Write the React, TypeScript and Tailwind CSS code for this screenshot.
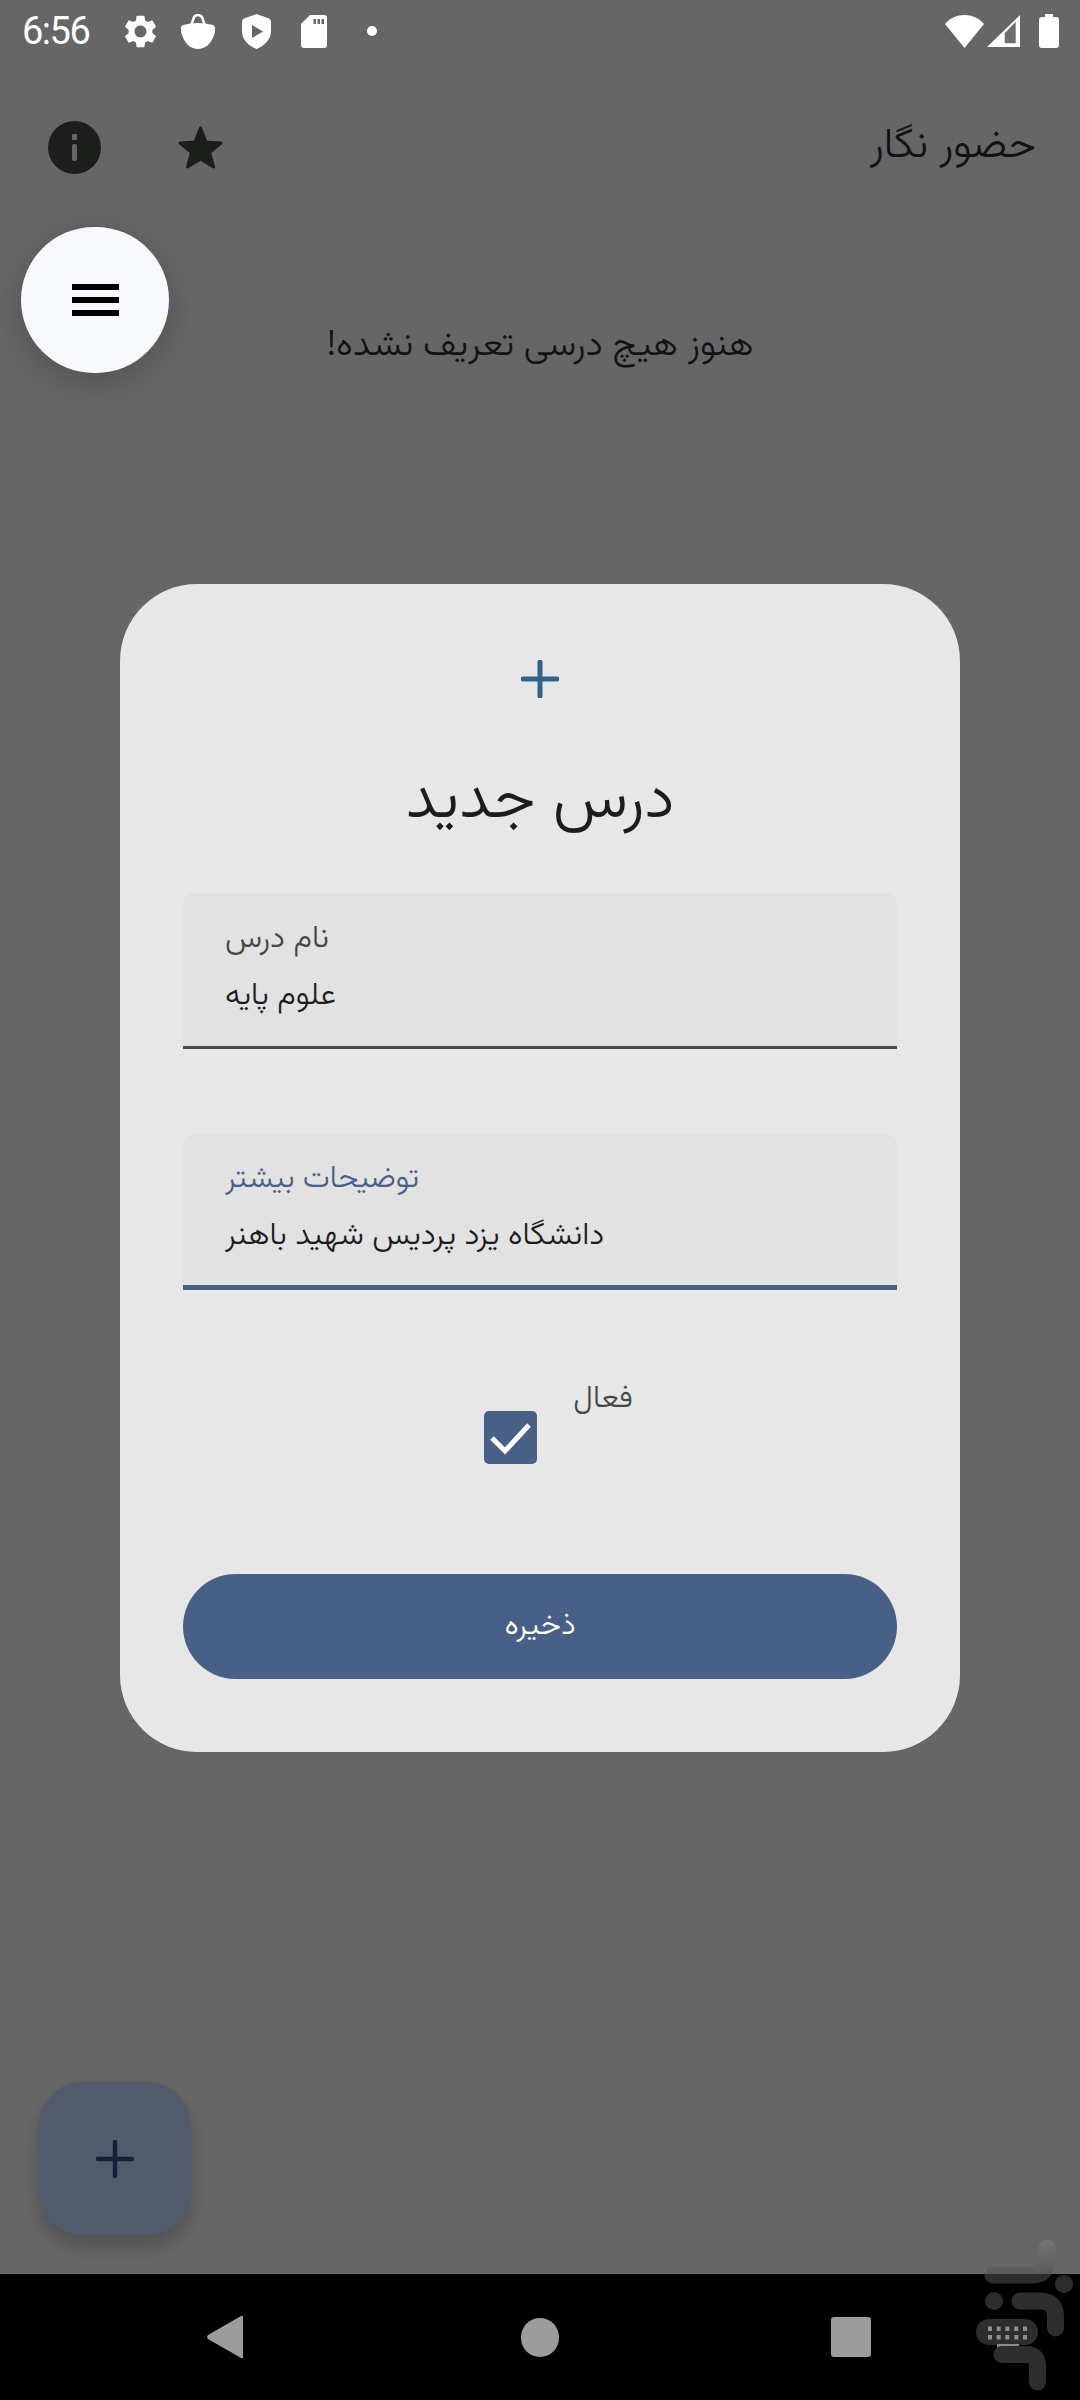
const fa = "font-['Vazirmatn','DejaVu_Sans','Noto_Sans',sans-serif] font-[350]"

function StatusBar() {
  return (
    <div className="h-[62px] shrink-0 flex items-center pl-[22px] pr-[21px] text-white">
      <span className="font-['Roboto',sans-serif] text-[38px] tracking-[-1.500px] leading-none w-[102px]">6:56</span>
      <svg viewBox="2.600 2 18.800 20" className="w-[33px] h-[33px] fill-white">
        <path d="M19.140 12.940c.04-.3.06-.61.06-.94 0-.32-.02-.64-.07-.94l2.030-1.580a.49.49 0 0 0 .12-.61l-1.920-3.320a.488.488 0 0 0-.59-.22l-2.390.96c-.5-.38-1.030-.7-1.620-.94l-.36-2.540a.484.484 0 0 0-.48-.41h-3.840c-.24 0-.43.17-.47.41l-.36 2.540c-.59.24-1.130.57-1.620.94l-2.390-.96c-.22-.08-.47 0-.59.22L2.740 8.870c-.12.21-.08.47.12.61l2.030 1.580c-.05.3-.09.63-.09.94s.02.64.07.94l-2.030 1.580a.49.49 0 0 0-.12.61l1.920 3.320c.12.22.37.29.59.22l2.390-.96c.5.38 1.030.7 1.620.94l.36 2.540c.05.24.24.41.48.41h3.840c.24 0 .44-.17.47-.41l.36-2.540c.59-.24 1.130-.56 1.620-.94l2.390.96c.22.08.47 0 .59-.22l1.920-3.320c.12-.22.07-.47-.12-.61l-2.010-1.580zM12 15.600c-1.980 0-3.600-1.620-3.600-3.600s1.620-3.600 3.600-3.600 3.600 1.620 3.600 3.600-1.620 3.600-3.600 3.600z" />
      </svg>
      <svg viewBox="0 0 34 35" className="w-[34px] h-[35px] ml-[24px] fill-white">
        <path d="M2 11Q17 7 32 11Q36 13 33 21C30 30 24 35 17 35C10 35 4 30 1 21Q-2 13 2 11z" />
        <path d="M10 12L13 3Q17-1 21 3L24 12" fill="none" stroke="white" strokeWidth="2.500" />
      </svg>
      <svg viewBox="0 0 29 35" className="w-[29px] h-[35px] ml-[27px] fill-white">
        <path d="M14.500 0L27 4.500Q29 5 29 8V17C29 26 22 32 14.500 35C7 32 0 26 0 17V8Q0 5 2 4.500z" />
        <path d="M10 11L21 17.500L10 24z" fill="#666666" />
      </svg>
      <svg viewBox="0 0 26 33" className="w-[26px] h-[33px] ml-[30px] fill-white">
        <path d="M9 0H23a3 3 0 0 1 3 3V30a3 3 0 0 1-3 3H3a3 3 0 0 1-3-3V9z" />
        <path d="M12.500 4H15V9H12.500zM16.500 4H19V9H16.500zM20.500 4H23V9H20.500z" fill="#666666" />
      </svg>
      <span className="w-[10px] h-[10px] rounded-full bg-white ml-[40px]" />
      <div className="flex-1" />
      <svg viewBox="0 0 39 33" className="w-[39px] h-[33px] fill-white">
        <path d="M19.500 33L0 9C5 3 12 0 19.500 0S34 3 39 9z" />
      </svg>
      <svg viewBox="0 0 33 32" className="w-[33px] h-[32px] ml-[3px]">
        <path d="M33 0L0 32H33z" fill="white" />
        <path d="M28.700 6.700L17.700 18.300V28.300H28.700z" fill="#6e6e6e" />
      </svg>
      <svg viewBox="0 0 20 34" className="w-[20px] h-[34px] ml-[19px] fill-white">
        <path d="M6 3V0h8v3h3a3 3 0 0 1 3 3v25a3 3 0 0 1-3 3H3a3 3 0 0 1-3-3V6a3 3 0 0 1 3-3z" />
      </svg>
    </div>
  )
}

function Field({ label, value, active }: { label: string; value: string; active?: boolean }) {
  return (
    <div
      dir="rtl"
      className={`h-[156px] rounded-t-[11px] bg-[#e2e2e2] pl-[42px] ${
        active ? 'pt-[26px] border-b-[5px] border-[#486085]' : 'pt-[27px] border-b-[3px] border-[#4a4c4a]'
      }`}
    >
      <p className={`${fa} leading-[40px] text-left ${active ? 'text-[31px] text-[#486085]' : 'text-[31.500px] text-[#444744]'}`}>
        {label}
      </p>
      <p className={`${fa} text-[31.500px] leading-[40px] mt-[17px] text-left text-[#1a1c1e]`}>{value}</p>
    </div>
  )
}

function Dialog() {
  return (
    <div className="absolute left-[120px] top-[584px] w-[840px] h-[1168px] rounded-[77px] bg-[#e7e7e7] px-[63px] flex flex-col">
      <svg viewBox="0 0 38 38" className="w-[38px] h-[38px] mt-[76px] self-center stroke-[#2d6488]" fill="none" strokeWidth="5" strokeLinecap="round">
        <path d="M19 2v34M2 19h34" />
      </svg>
      <h2 dir="rtl" className={`${fa} text-[64px] leading-[70px] text-center text-[#1a1c1e] mt-[68px]`}>
        درس جدید
      </h2>
      <div className="mt-[57px]">
        <Field label="نام درس" value="علوم پایه" />
      </div>
      <div className="mt-[85px]">
        <Field label="توضیحات بیشتر" value="دانشگاه یزد پردیس شهید باهنر" active />
      </div>
      <div className="flex justify-center items-start mt-[90px] pl-[37px]">
        <div className="w-[53px] h-[53px] rounded-[5px] bg-[#486085] mt-[31px]">
          <svg viewBox="0 0 53 53" className="w-[53px] h-[53px]" fill="none" stroke="white" strokeWidth="5">
            <path d="M8 27l13 13 24-26" />
          </svg>
        </div>
        <span dir="rtl" className={`${fa} text-[31px] leading-[40px] text-[#444744] ml-[36px]`}>
          فعال
        </span>
      </div>
      <button className="mt-[110px] h-[105px] rounded-full bg-[#486085] text-white flex items-center justify-center">
        <span dir="rtl" className={`${fa} text-[31px] leading-[40px]`}>
          ذخیره
        </span>
      </button>
    </div>
  )
}

// store watermark in the bottom right corner, it straddles the nav bar edge
function Watermark() {
  return (
    <svg viewBox="0 0 120 170" className="absolute left-[960px] top-[2230px] w-[120px] h-[170px]">
      <defs>
        <linearGradient id="mark" gradientUnits="userSpaceOnUse" x1="0" y1="10" x2="0" y2="170">
          <stop offset="0" stopColor="#727272" />
          <stop offset="0.12" stopColor="#666666" />
          <stop offset="0.21" stopColor="#5a5a5a" />
          <stop offset="0.21" stopColor="#2d2d2d" />
          <stop offset="1" stopColor="#2d2d2d" />
        </linearGradient>
      </defs>
      <path d="M87 18V30Q87 45 72 45H33" fill="none" stroke="url(#mark)" strokeWidth="17" strokeLinecap="round" />
      <circle cx="104" cy="54" r="9" fill="#2d2d2d" />
      <circle cx="34" cy="71" r="9" fill="#2d2d2d" />
      <path d="M60 71H80Q95.500 71 95.500 86V98" fill="none" stroke="#2d2d2d" strokeWidth="17" strokeLinecap="round" />
      <rect x="16" y="89" width="62" height="26" rx="13" fill="#2d2d2d" />
      {[30, 38.7, 47.3, 56.3, 65].map(x => (
        <g key={x} fill="#8f8f8f">
          <rect x={x - 2} y="96.500" width="4" height="4.500" />
          <rect x={x - 2} y="105" width="4" height="4.500" />
        </g>
      ))}
      <rect x="37" y="114" width="22" height="4" fill="#8a8a8a" />
      <path d="M42 124.500H66Q77.500 124.500 77.500 136V152" fill="none" stroke="#2d2d2d" strokeWidth="17" strokeLinecap="round" />
    </svg>
  )
}

export default function App() {
  return (
    <div className="relative w-[1080px] h-[2400px] overflow-hidden bg-[#666666] flex flex-col">
      <StatusBar />

      <header className="h-[96px] flex items-center justify-between pl-[48px] pr-[44px] mt-[37px]">
        <div className="flex items-center">
          <svg viewBox="0 0 53 53" className="w-[53px] h-[53px]">
            <circle cx="26.500" cy="26.500" r="26.500" fill="#1c1e1c" />
            <rect x="24" y="13" width="5" height="6" rx="1" fill="#666666" />
            <rect x="24" y="23" width="5" height="17" rx="2" fill="#666666" />
          </svg>
          <svg viewBox="0 0 45 43" className="w-[45px] h-[43px] ml-[77px] fill-[#1c1e1c] stroke-[#1c1e1c]" strokeWidth="3" strokeLinejoin="round">
            <path d="M22.500 2L28 16 43 17 31.500 26.500 35.500 41 22.500 33 9.500 41 13.500 26.500 2 17 17 16z" />
          </svg>
        </div>
        <span dir="rtl" className={`${fa} text-[42px] leading-[50px] text-[#111213]`}>
          حضور نگار
        </span>
      </header>

      <p dir="rtl" className={`${fa} text-[36.500px] leading-[46px] text-[#111213] text-center mt-[129px]`}>
        هنوز هیچ درسی تعریف نشده!
      </p>

      {/* floating menu button */}
      <div className="absolute left-[21px] top-[227px] w-[148px] h-[146px] rounded-full bg-[#f8f9fc] shadow-[0_10px_40px_rgba(0,0,0,0.2)] flex flex-col items-center justify-center gap-[7px]">
        <span className="w-[47px] h-[6px] bg-black" />
        <span className="w-[47px] h-[6px] bg-black" />
        <span className="w-[47px] h-[6px] bg-black" />
      </div>

      <Dialog />

      {/* add fab */}
      <div className="absolute left-[39px] top-[2082px] w-[152px] h-[153px] rounded-[44px] bg-[#515b6b] shadow-[0_12px_20px_rgba(0,0,0,0.2)] flex items-center justify-center">
        <svg viewBox="0 0 38 38" className="w-[38px] h-[38px] stroke-[#14213a]" fill="none" strokeWidth="4.500" strokeLinecap="round">
          <path d="M19 2v34M2 19h34" />
        </svg>
      </div>

      {/* nav bar */}
      <nav className="absolute left-0 right-0 bottom-0 h-[126px] bg-black flex items-center pl-[207px]">
        <svg viewBox="0 0 36 42" className="w-[36px] h-[42px] fill-[#9c9c9c]">
          <path d="M36 1v40a1 1 0 0 1-2 1L1 23a3 3 0 0 1 0-4L34 0a1 1 0 0 1 2 1z" />
        </svg>
        <span className="w-[38px] h-[39px] rounded-full bg-[#9c9c9c] ml-[278px]" />
        <span className="w-[40px] h-[40px] rounded-[3px] bg-[#9c9c9c] ml-[272px]" />
      </nav>

      <Watermark />
    </div>
  )
}
